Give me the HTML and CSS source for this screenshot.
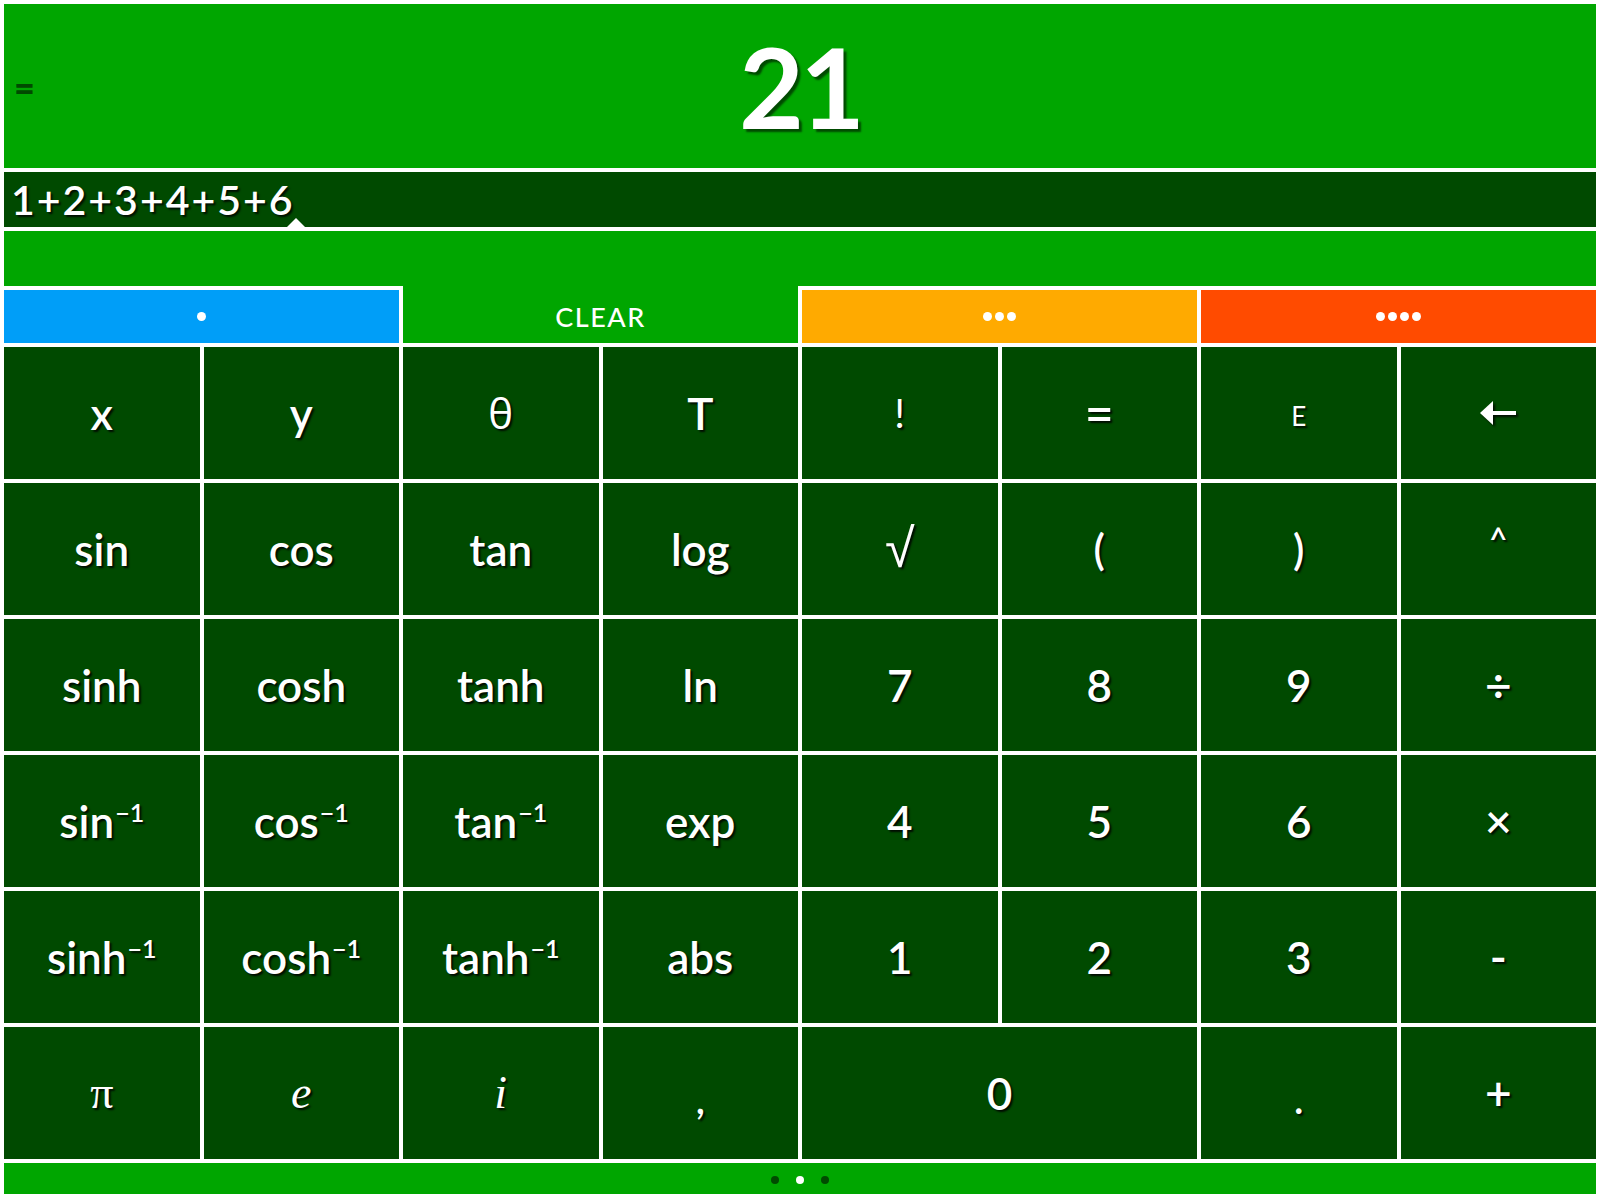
FILE: index.html
```html
<!DOCTYPE html>
<html lang="en">
<head>
<meta charset="utf-8">
<title>Calculator</title>
<link rel="stylesheet" href="styles.css">
</head>
<body>
<div class="app">
  <header class="display">
    <span class="eq">=</span>
    <span class="result">21</span>
    <span></span>
  </header>
  <div class="expr">
    <span class="expr-text">1+2+3+4+5+6<span class="caret"></span></span>
  </div>
  <div class="band"></div>
  <div class="modes">
    <div class="mode mode-blue"><span class="dots"><i></i></span></div>
    <div class="mode mode-clear">CLEAR</div>
    <div class="mode mode-orange"><span class="dots"><i></i><i></i><i></i></span></div>
    <div class="mode mode-red"><span class="dots"><i></i><i></i><i></i><i></i></span></div>
  </div>
  <div class="keys">
    <div class="k">x</div>
    <div class="k">y</div>
    <div class="k k-theta">θ</div>
    <div class="k">T</div>
    <div class="k k-sym">!</div>
    <div class="k k-eq">=</div>
    <div class="k k-small">E</div>
    <div class="k"><svg class="arrow" width="36" height="26" viewBox="0 0 36 26"><polygon points="0,13 13,1 13,25" fill="#fff"/><rect x="12" y="11" width="24" height="4" fill="#fff"/></svg></div>

    <div class="k">sin</div>
    <div class="k">cos</div>
    <div class="k">tan</div>
    <div class="k">log</div>
    <div class="k k-root">√</div>
    <div class="k k-paren">(</div>
    <div class="k k-paren">)</div>
    <div class="k k-caret">^</div>

    <div class="k">sinh</div>
    <div class="k">cosh</div>
    <div class="k">tanh</div>
    <div class="k">ln</div>
    <div class="k">7</div>
    <div class="k">8</div>
    <div class="k">9</div>
    <div class="k k-op">÷</div>

    <div class="k"><span class="lbl">sin<sup>−1</sup></span></div>
    <div class="k"><span class="lbl">cos<sup>−1</sup></span></div>
    <div class="k"><span class="lbl">tan<sup>−1</sup></span></div>
    <div class="k">exp</div>
    <div class="k">4</div>
    <div class="k">5</div>
    <div class="k">6</div>
    <div class="k k-op">×</div>

    <div class="k"><span class="lbl">sinh<sup>−1</sup></span></div>
    <div class="k"><span class="lbl">cosh<sup>−1</sup></span></div>
    <div class="k"><span class="lbl">tanh<sup>−1</sup></span></div>
    <div class="k">abs</div>
    <div class="k">1</div>
    <div class="k">2</div>
    <div class="k">3</div>
    <div class="k k-op">-</div>

    <div class="k k-serif">π</div>
    <div class="k k-serif k-italic">e</div>
    <div class="k k-serif k-italic">i</div>
    <div class="k k-punct">,</div>
    <div class="k k-zero">0</div>
    <div class="k k-punct">.</div>
    <div class="k k-op">+</div>
  </div>
  <footer class="pager"><i></i><i class="on"></i><i></i></footer>
</div>
</body>
</html>
```

FILE: styles.css
```css
* { box-sizing: border-box; }

html, body {
  margin: 0;
  padding: 0;
  background: #ffffff;
}

body {
  font-family: "Lato", "Noto Sans", sans-serif;
  color: #fff;
}

.app {
  display: flex;
  flex-direction: column;
  gap: 4px;
  padding: 4px 4px 5px 4px;
  width: 1600px;
  height: 1199px;
}

.display {
  height: 164px;
  background: #00a600;
  display: grid;
  grid-template-columns: 1fr auto 1fr;
  align-items: center;
}

.eq {
  justify-self: start;
  padding-left: 10px;
  padding-top: 2px;
  font-size: 36px;
  font-weight: 900;
  color: #004a00;
  line-height: 1;
}

.result {
  font-size: 112px;
  font-weight: 700;
  line-height: 1;
  letter-spacing: -4px;
  text-shadow: 3px 3px 2px #004a00;
}

.expr {
  height: 55px;
  background: #004a00;
  display: flex;
  align-items: stretch;
  padding-left: 7px;
}

.expr-text {
  position: relative;
  display: flex;
  align-items: center;
  font-size: 41px;
  font-weight: 600;
  letter-spacing: 2px;
  text-shadow: 2px 2px 2px rgba(0, 0, 0, 0.8);
}

.caret {
  position: absolute;
  right: -10px;
  bottom: 0;
  width: 0;
  height: 0;
  border-left: 9px solid transparent;
  border-right: 9px solid transparent;
  border-bottom: 9px solid #fff;
}

.band {
  height: 55px;
  background: #00a600;
}

.modes {
  height: 53px;
  display: grid;
  grid-template-columns: repeat(4, 1fr);
  gap: 4px;
}

.mode {
  display: flex;
  align-items: center;
  justify-content: center;
}

.mode-blue { background: #009ef8; }
.mode-orange { background: #ffaa00; }
.mode-red { background: #ff4b00; }

.mode-clear {
  background: #00a600;
  margin-top: -4px;
  padding-top: 4px;
  font-size: 27px;
  font-weight: 500;
  letter-spacing: 1.5px;
}

.dots {
  display: flex;
  gap: 3px;
}

.dots i {
  display: block;
  width: 9px;
  height: 9px;
  border-radius: 50%;
  background: #fff;
}

.keys {
  display: grid;
  grid-template-columns: repeat(8, 1fr);
  grid-template-rows: repeat(6, 132px);
  gap: 4px;
}

.k {
  background: #004a00;
  display: flex;
  align-items: center;
  justify-content: center;
  font-size: 44px;
  font-weight: 600;
  line-height: 1;
  text-shadow: 2px 2px 2px rgba(0, 0, 0, 0.85);
}

.lbl {
  display: inline-block;
  line-height: 1;
}

.lbl sup {
  font-size: 25px;
  line-height: 0;
  vertical-align: 16px;
  margin-left: 1px;
}

.k-theta { font-weight: 400; font-family: "Open Sans", "Lato", sans-serif; font-size: 42px; }
.k-sym { font-weight: 400; font-size: 40px; }
.k-eq { font-weight: 600; font-size: 50px; }
.k-small { font-weight: 400; font-size: 26px; padding-top: 6px; }
.k-root { font-weight: 300; font-size: 54px; font-family: "DejaVu Sans", sans-serif; }
.k-paren { font-weight: 600; font-size: 42px; }
.k-caret { font-weight: 600; font-size: 32px; padding-bottom: 20px; }
.k-op { font-weight: 600; font-size: 46px; }
.k-serif { font-family: "Liberation Serif", "DejaVu Serif", serif; font-weight: 400; font-size: 46px; }
.k-italic { font-style: italic; }
.k-punct { font-weight: 600; font-size: 40px; padding-top: 12px; }
.k-zero { grid-column: span 2; }

.arrow { filter: drop-shadow(2px 2px 1px rgba(0, 0, 0, 0.8)); }

.pager {
  height: 31px;
  background: #00a600;
  display: flex;
  align-items: center;
  justify-content: center;
  gap: 17px;
  padding-top: 2px;
}

.pager i {
  display: block;
  width: 8px;
  height: 8px;
  border-radius: 50%;
  background: #004a00;
}

.pager i.on { background: #fff; }
```
